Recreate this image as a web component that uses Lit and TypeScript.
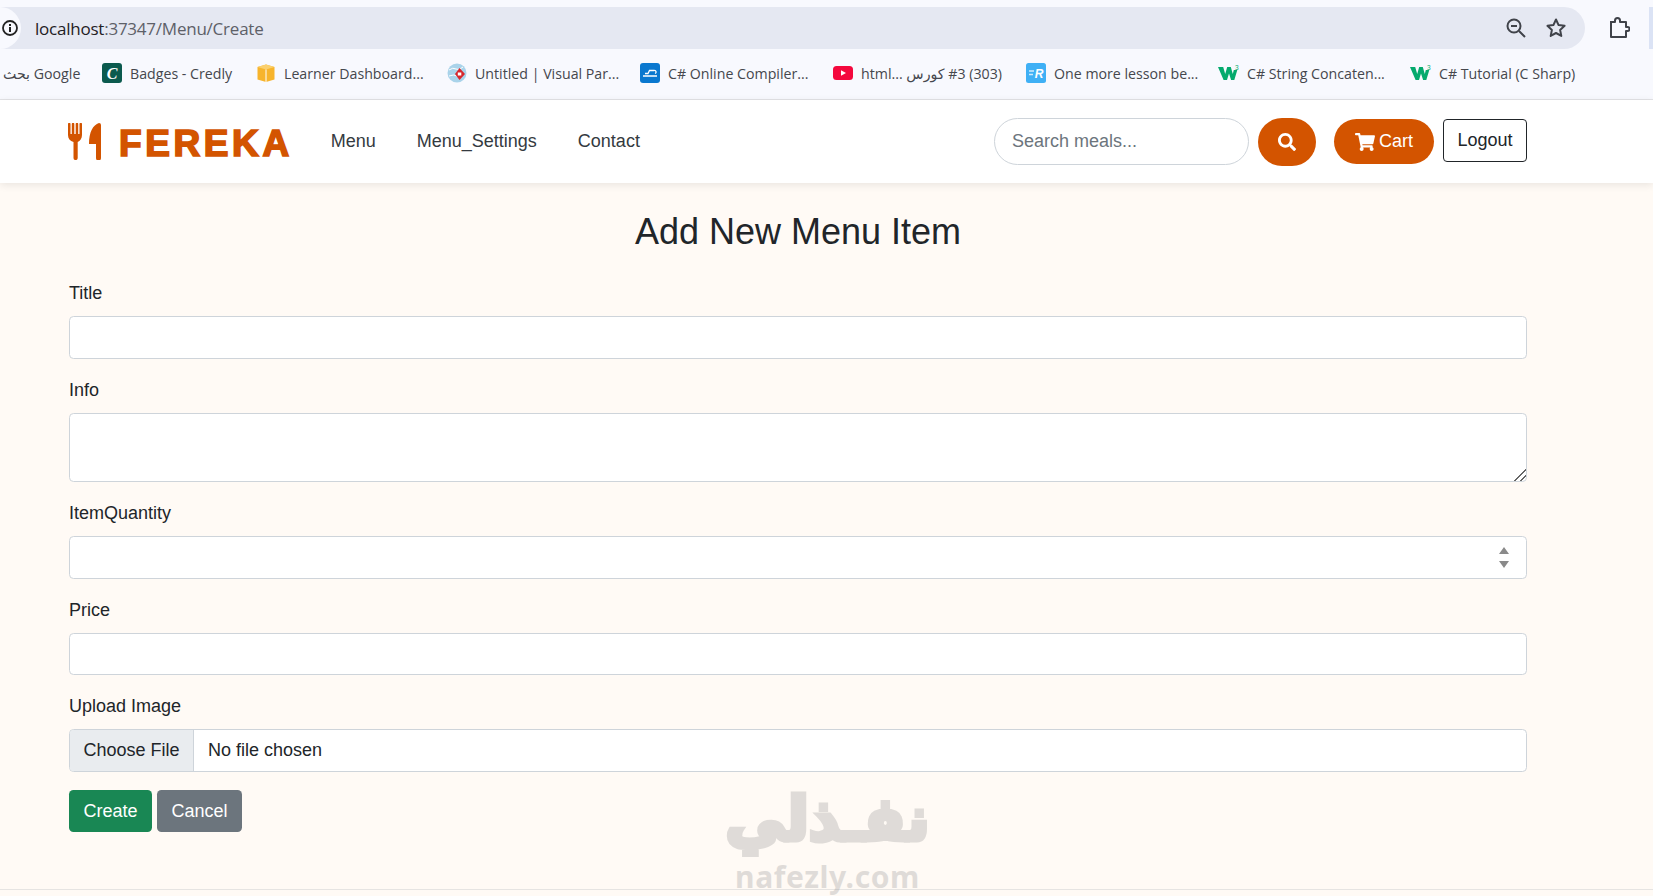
import { LitElement, html, css } from "lit";
import { customElement } from "lit/decorators.js";

const w3 = html`<svg viewBox="0 0 21 20" width="21" height="20"><path d="M0 4h5.200l2 7 2-7h3.600l2 7 1-4h3.500l-3 10h-3.200L11 10.500 9 17H5.600z" fill="#04aa6d"/><text x="17" y="6.500" font-family="Liberation Sans" font-size="6.500" fill="#04aa6d">3</text></svg>`;

const icons: Record<string, unknown> = {
  credly: html`<svg viewBox="0 0 20 20" width="20" height="20"><rect width="20" height="20" rx="3" fill="#0b5a4e"/><text x="10" y="15.500" text-anchor="middle" font-family="Liberation Serif" font-style="italic" font-weight="700" font-size="16" fill="#fff">C</text></svg>`,
  cube: html`<svg viewBox="0 0 20 20" width="20" height="20"><path d="M10 1.500 18.500 4v12.500L10 19 1.500 16.500V4z" fill="#f7b42c"/><path d="M1.500 4 10 6.500 18.500 4 10 1.500z" fill="#fbd06d"/><path d="M10 6.500V19" stroke="#fff" stroke-width="1"/></svg>`,
  globe: html`<svg viewBox="0 0 20 20" width="20" height="20"><circle cx="10" cy="10" r="9.500" fill="#a9d3ea"/><path d="M2 7q4-3 7-1t7-2M2 13q5-2 8 0" stroke="#fff" fill="none"/><path d="M12.500 5 18 11l-5.500 6L8 11z" fill="#d8262c"/><rect x="10.800" y="9.500" width="3.500" height="3" fill="#fff"/></svg>`,
  cloud: html`<svg viewBox="0 0 20 20" width="20" height="20"><rect width="20" height="20" rx="3" fill="#0a78cf"/><path d="M3 13h14M5 10.500h3l1.500-3h4.500a1.500 1.500 0 0 1 1 3" stroke="#fff" stroke-width="1.300" fill="none"/></svg>`,
  yt: html`<svg viewBox="0 0 20 20" width="20" height="20"><rect y="3" width="20" height="14" rx="3.500" fill="#f4083d"/><path d="M8 7.200v5.600l5-2.800z" fill="#fff"/></svg>`,
  r: html`<svg viewBox="0 0 20 20" width="20" height="20"><rect width="20" height="20" rx="2.500" fill="#3fb0f5"/><path d="M3 8h5M3 11.500h4" stroke="#cfeafc" stroke-width="1.500"/><text x="13" y="15" text-anchor="middle" font-family="Liberation Sans" font-weight="700" font-style="italic" font-size="12" fill="#fff">R</text></svg>`,
  w3,
};

const bookmarks = [
  { w: 99, icon: "", t: "بحث Google" },
  { w: 154, icon: "credly", t: "Badges - Credly" },
  { w: 191, icon: "cube", t: "Learner Dashboard..." },
  { w: 193, icon: "globe", t: "Untitled | Visual Par..." },
  { w: 193, icon: "cloud", t: "C# Online Compiler..." },
  { w: 193, icon: "yt", t: "html... كورس\u200E #3 (303)" },
  { w: 192, icon: "r", t: "One more lesson be..." },
  { w: 192, icon: "w3", t: "C# String Concaten..." },
  { w: 215, icon: "w3", t: "C# Tutorial (C Sharp)" },
];

@customElement("app-root")
export class AppRoot extends LitElement {
  static styles = css`
    :host { display: block; width: 1653px; height: 896px; overflow: hidden; position: relative; background: #fffaf5; color: #212529; font-family: "Liberation Sans", Arial, sans-serif; }
    * { box-sizing: border-box; }
    .chrome { height: 100px; background: #f8f9fe; border-bottom: 1px solid #e3e3e6; padding-top: 7px; }
    .toolbar { display: flex; align-items: center; height: 42px; }
    .omni { width: 1585px; height: 42px; border-radius: 0 21px 21px 0; background: #e5e8f2; display: flex; align-items: center; flex: none; }
    .chip { width: 21px; height: 42px; border-radius: 0 21px 21px 0; background: #f8f9fe; display: flex; align-items: center; justify-content: flex-end; padding-right: 2px; flex: none; }
    .url { margin-left: 14px; font: 17px "Open Sans", sans-serif; letter-spacing: -0.23px; color: #5d6068; flex: 1; }
    .url b { font-weight: 400; color: #1f2024; }
    .omni-icon { display: flex; margin-right: 18px; }
    .puzzle { margin-left: 23px; display: flex; }
    .sliver { width: 4px; height: 42px; background: #dbe3f5; margin-left: 19px; flex: none; }
    .bookmarks { display: flex; align-items: center; height: 48px; padding-left: 3px; white-space: nowrap; }
    .bm { display: flex; align-items: center; gap: 8px; font: 14.200px "Open Sans", "DejaVu Sans", sans-serif; color: #45474d; flex: none; }
    .bm svg { flex: none; display: block; }
    nav { height: 83px; background: #fff; box-shadow: 0 2px 8px rgba(0, 0, 0, 0.09); display: flex; align-items: center; padding: 0 126px 0 68px; position: relative; }
    .brand { display: flex; align-items: center; gap: 17px; color: #d35400; }
    .brand svg { display: block; }
    .brand span { font: 700 37px/1 "Liberation Sans", sans-serif; letter-spacing: 3.600px; -webkit-text-stroke: 1.700px #d35400; padding-top: 4px; }
    .links { display: flex; gap: 41px; margin-left: 38px; font-size: 18px; color: #343a40; }
    .right { margin-left: auto; display: flex; align-items: center; }
    .search { width: 255px; height: 47px; border: 1px solid #ced4da; border-radius: 24px; padding: 0 17px; font: 18px "Liberation Sans", sans-serif; outline: none; background: #fff; }
    .search::placeholder { color: #6c757d; opacity: 1; }
    .sbtn { width: 58px; height: 48px; border-radius: 24px; background: #d35400; margin-left: 9px; display: flex; align-items: center; justify-content: center; }
    .cart { width: 100px; height: 45px; border-radius: 23px; background: #d35400; color: #fff; margin-left: 18px; display: flex; align-items: center; justify-content: center; gap: 4px; font-size: 18px; }
    .logout { width: 84px; height: 43px; border: 1px solid #212529; border-radius: 4px; margin: 0 0 2px 9px; display: flex; align-items: center; justify-content: center; font-size: 18px; color: #212529; }
    main { padding: 26px 126px 0 69px; }
    h2 { margin: 0 0 25px; font-weight: 400; font-size: 36px; line-height: 46px; text-align: center; }
    .field { margin-bottom: 18.500px; }
    .field.tight { margin-bottom: 17.500px; }
    label { display: block; font-size: 18px; line-height: 26px; margin-bottom: 10px; }
    .input { display: block; width: 100%; height: 42.500px; border: 1px solid #ced4da; border-radius: 4.500px; background: #fff; font: 18px "Liberation Sans", sans-serif; padding: 0 13px; outline: none; }
    textarea.input { height: 69px; resize: vertical; padding-top: 6px; margin-bottom: -1px; }
    textarea.input::-webkit-resizer { background: linear-gradient(135deg, transparent 0 60%, #666 60% 66%, transparent 66% 78%, #666 78% 84%, transparent 84%); }
    .number { display: flex; align-items: center; justify-content: flex-end; padding-right: 17px; height: 43px; margin-bottom: -0.500px; }
    .file { display: flex; align-items: stretch; padding: 0; overflow: hidden; font-size: 18px; height: 43px; }
    .file .choose { width: 124px; background: #e9ecef; border-right: 1px solid #ced4da; display: flex; align-items: center; justify-content: center; }
    .file .none { margin-left: 14px; display: flex; align-items: center; }
    .actions { display: flex; gap: 5px; }
    .btn { height: 42px; border-radius: 4.500px; color: #fff; font-size: 18px; display: flex; align-items: center; justify-content: center; }
    .create { width: 83px; background: #198754; }
    .cancel { width: 85px; background: #6c757d; }
    footer { margin-top: 57px; border-top: 1px solid #e6e4e2; }
    .watermark { position: absolute; left: 720px; top: 778px; width: 215px; text-align: center; color: #8c8c8c; opacity: 0.27; pointer-events: none; }
    .wm-ar { font: 700 60px/82px "DejaVu Sans", sans-serif; white-space: nowrap; -webkit-text-stroke: 5px #8c8c8c; }
    .wm-en { font: 700 30px/36px "Noto Sans", sans-serif; letter-spacing: 0.600px; margin-top: -1px; }
  `;

  render() {
    return html`
      <div class="chrome">
        <div class="toolbar">
          <div class="omni">
            <div class="chip">
              <svg width="18" height="18" viewBox="0 0 18 18"><circle cx="9" cy="9" r="7" fill="none" stroke="#222" stroke-width="1.800"/><rect x="8" y="8" width="2" height="5" fill="#222"/><rect x="8" y="5" width="2" height="2" fill="#222"/></svg>
            </div>
            <div class="url"><b>localhost</b>:37347/Menu/Create</div>
            <span class="omni-icon"><svg width="22" height="22" viewBox="0 0 22 22" fill="none" stroke="#40434a" stroke-width="2"><circle cx="9" cy="9" r="6.500"/><path d="M6 9h6M14 14l6 6"/></svg></span>
            <span class="omni-icon"><svg width="22" height="22" viewBox="0 0 22 22" fill="none" stroke="#40434a" stroke-width="2" stroke-linejoin="round"><path d="M11 2.500l2.600 5.600 6 .7-4.500 4.100 1.200 6L11 16l-5.300 2.900 1.200-6L2.400 8.800l6-.7z"/></svg></span>
          </div>
          <span class="puzzle"><svg width="22" height="24" viewBox="0 0 22 24" fill="none" stroke="#40434a" stroke-width="2" stroke-linejoin="round"><path d="M2 6h5V4.500a2.500 2.500 0 0 1 5 0V6h6v5h1.500a2 2 0 0 1 0 4H18v6H3v-5"/><path d="M3 16V6"/></svg></span>
          <div class="sliver"></div>
        </div>
        <div class="bookmarks">
          ${bookmarks.map(
            (b) => html`<div class="bm" style="width:${b.w}px">${b.icon ? icons[b.icon] : ""}<span>${b.t}</span></div>`
          )}
        </div>
      </div>
      <nav>
        <div class="brand">
          <svg width="34" height="37" viewBox="0 0 34 37" fill="#d35400"><path d="M0 1a1 1 0 0 1 2.500 0v10h1.300V1a1.200 1.200 0 0 1 2.500 0v10h1.400V1a1.200 1.200 0 0 1 2.500 0v10h1.300V1a1.200 1.200 0 0 1 2.500 0v11c0 3.500-2 6-4.300 7v16a2 2 0 0 1-4.200 0V19C2 18 0 15.500 0 12z"/><path d="M31 0C25 2 21 9 21 21h7v14a2.500 2.500 0 0 0 5 0V2a2 2 0 0 0-2-2z"/></svg>
          <span>FEREKA</span>
        </div>
        <div class="links"><span>Menu</span><span>Menu_Settings</span><span>Contact</span></div>
        <div class="right">
          <input class="search" placeholder="Search meals..." />
          <div class="sbtn"><svg width="18" height="18" viewBox="0 0 512 512" fill="#fff"><path d="M505 442.700L405.300 343c-4.500-4.500-10.600-7-17-7H372c27.600-35.300 44-79.700 44-128C416 93.100 322.900 0 208 0S0 93.100 0 208s93.100 208 208 208c48.300 0 92.700-16.400 128-44v16.300c0 6.400 2.500 12.500 7 17l99.700 99.700c9.400 9.400 24.600 9.400 33.900 0l28.300-28.300c9.400-9.400 9.400-24.600.1-34zM208 336c-70.700 0-128-57.200-128-128 0-70.700 57.200-128 128-128 70.700 0 128 57.200 128 128 0 70.700-57.200 128-128 128z"/></svg></div>
          <div class="cart"><svg width="20" height="18" viewBox="0 0 576 512" fill="#fff"><path d="M528.120 301.319l47.273-208C578.806 78.301 567.391 64 551.990 64H159.208l-9.166-44.810C147.758 8.021 137.930 0 126.529 0H24C10.745 0 0 10.745 0 24v16c0 13.255 10.745 24 24 24h69.883l70.248 343.435C147.325 417.100 136 435.222 136 456c0 30.928 25.072 56 56 56s56-25.072 56-56c0-15.674-6.447-29.835-16.824-40h209.647C430.447 426.165 424 440.326 424 456c0 30.928 25.072 56 56 56s56-25.072 56-56c0-22.172-12.888-41.332-31.579-50.405l5.517-24.276c3.413-15.018-8.002-29.319-23.403-29.319H218.117l-6.545-32h293.145c11.206 0 20.920-7.754 23.403-18.681z"/></svg><span>Cart</span></div>
          <div class="logout">Logout</div>
        </div>
      </nav>
      <main>
        <h2>Add New Menu Item</h2>
        <div class="field"><label>Title</label><input class="input" /></div>
        <div class="field"><label>Info</label><textarea class="input"></textarea></div>
        <div class="field"><label>ItemQuantity</label>
          <div class="input number"><svg width="10" height="21" viewBox="0 0 10 21" fill="#8a8a8a"><path d="M5 0l5 7H0zM0 14h10l-5 7z"/></svg></div>
        </div>
        <div class="field tight"><label>Price</label><input class="input" /></div>
        <div class="field"><label>Upload Image</label>
          <div class="input file"><div class="choose">Choose File</div><div class="none">No file chosen</div></div>
        </div>
        <div class="actions"><div class="btn create">Create</div><div class="btn cancel">Cancel</div></div>
      </main>
      <footer></footer>
      <div class="watermark"><div class="wm-ar">نفـذلي</div><div class="wm-en">nafezly.com</div></div>
    `;
  }
}
